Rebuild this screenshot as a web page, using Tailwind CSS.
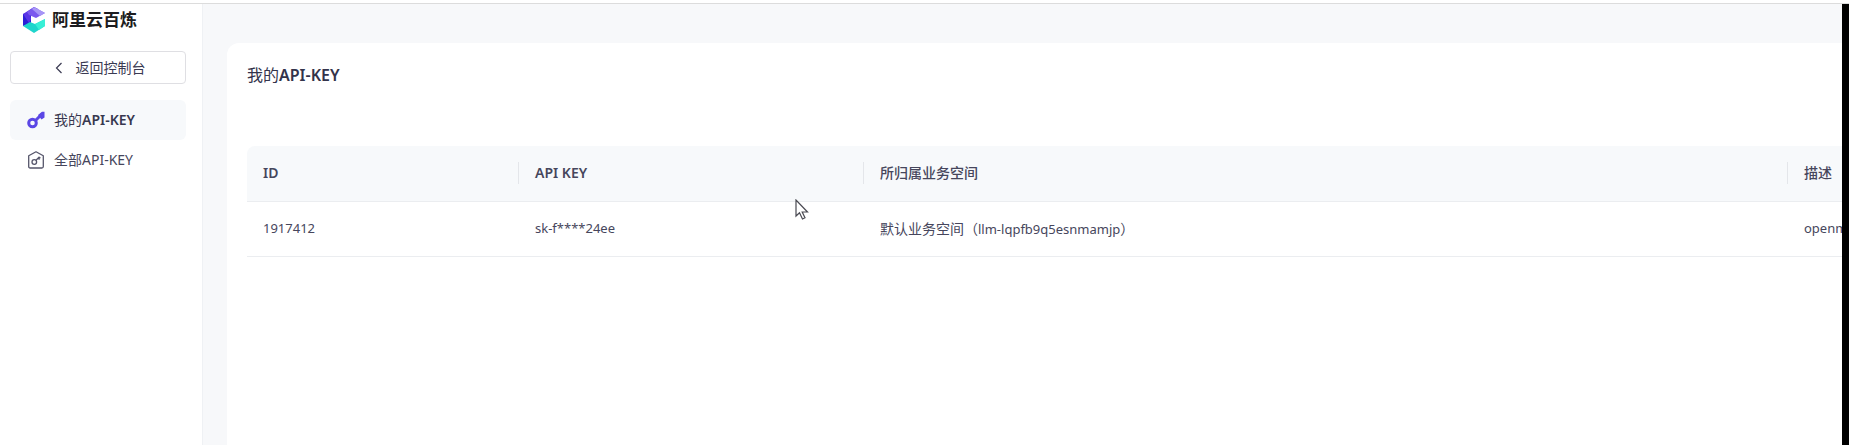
<!DOCTYPE html>
<html lang="zh-CN">
  <head>
    <meta charset="UTF-8" />
    <meta name="viewport" content="width=device-width, initial-scale=1.0" />
    <title>阿里云百炼 - 我的API-KEY</title>
    <script src="https://cdn.jsdelivr.net/npm/@tailwindcss/browser@4"></script>
  </head>
  <body class="flex h-screen flex-col overflow-hidden bg-white font-['Noto_Sans','Noto_Sans_CJK_SC',sans-serif] text-sm text-[#46465c]">
    <div class="h-1 shrink-0 border-b border-[#dcdcdc]"></div>

    <div class="flex min-h-0 flex-1">
      <!-- Sidebar -->
      <aside class="w-[203px] shrink-0 border-r border-[#eff1f4] pr-4 pl-[10px]">
        <a href="#" class="flex h-8 items-center gap-[7px] pl-[13px] text-[17px] font-bold text-[#1c1c20]">
          <svg class="h-[26px] w-[22px]" viewBox="0 0 22 26">
            <path d="M0 7 8 5v12l-8 2z" fill="#2c1fd6" />
            <path d="M0 7 11 0l4 2-8 6 1 4-2 4z" fill="#5a35e6" />
            <path d="M4 5 11 0l11 6-9 5-7-3z" fill="#7b58ee" />
            <path d="M9 2 11 0l11 6-5 3z" fill="#a795f6" />
            <path d="M0 19l7-4 5 2 10-5v7l-11 7z" fill="#1fd5cc" />
            <path d="M12 17l10-5v7l-6 4z" fill="#38efd6" />
          </svg>
          阿里云百炼
        </a>

        <button type="button" class="mt-[15px] flex h-[33px] w-full items-center justify-center gap-[13px] rounded border border-[#dfdfe3] pl-1 text-[#3a3a52]">
          <svg class="h-3 w-2" viewBox="0 0 8 12" fill="none" stroke="currentColor" stroke-width="1.2">
            <path d="M6.500 1 1.500 6l5 5" />
          </svg>
          返回控制台
        </button>

        <nav class="mt-4">
          <a href="#" class="flex h-10 items-center gap-[9px] rounded-md bg-[#f7f9fb] pl-[17px] text-[#38384f]">
            <svg class="size-[18px]" viewBox="0 0 18 18" fill="none" stroke="#5b47e5">
              <circle cx="5.500" cy="12" r="3.800" stroke-width="3" />
              <path d="M8.500 9.500 15.500 2.500" stroke-width="3" />
              <path d="M11 4 15 .8h2.500v5.700l-3 2z" fill="#5b47e5" stroke="none" />
            </svg>
            <span>我的<span class="font-semibold">API-KEY</span></span>
          </a>
          <a href="#" class="flex h-10 items-center gap-[9px] rounded-md pl-[17px]">
            <svg class="size-[18px]" viewBox="0 0 18 18" fill="none" stroke="#55556a" stroke-width="1.300" stroke-linejoin="round">
              <path d="M9 .8 16.300 4.800v10.700q0 1.500-1.500 1.500H3.200q-1.500 0-1.500-1.500V4.800z" />
              <circle cx="7.300" cy="11" r="2.300" />
              <path d="M9 9.300 12.500 5.800M11 7.300l1.600 1.200M12 6.200l1.500.8" />
            </svg>
            全部API-KEY
          </a>
        </nav>
      </aside>

      <!-- Content -->
      <main class="flex min-w-0 flex-1 bg-[#f7f8fa] pt-[39px] pl-6">
        <section class="min-w-0 flex-1 overflow-hidden rounded-tl-xl bg-white pt-5 pl-5">
          <h1 class="text-base text-[#33334b]">我的<span class="font-semibold">API-KEY</span></h1>

          <div class="mt-[59px] overflow-hidden rounded-tl-lg">
            <table class="w-[calc(100%+106px)] table-fixed text-left">
              <colgroup>
                <col class="w-[272px]" />
                <col class="w-[345px]" />
                <col />
                <col class="w-[160px]" />
              </colgroup>
              <thead class="bg-[#f7f9fb]">
                <tr class="h-[55px] border-b border-[#ebedf0]">
                  <th class="font-semibold">
                    <div class="border-r border-[#e4e6ea] px-4 leading-[22px]">ID</div>
                  </th>
                  <th class="font-semibold">
                    <div class="border-r border-[#e4e6ea] px-4 leading-[22px]">API KEY</div>
                  </th>
                  <th class="font-medium">
                    <div class="border-r border-[#e4e6ea] px-4 leading-[22px]">所归属业务空间</div>
                  </th>
                  <th class="px-4 font-medium">描述</th>
                </tr>
              </thead>
              <tbody>
                <tr class="h-[55px] border-b border-[#ebedf0]">
                  <td class="px-4 text-[13px]">1917412</td>
                  <td class="px-4 text-[13px]">sk-f****24ee</td>
                  <td class="px-4">默认业务空间（<span class="text-[13px]">llm-lqpfb9q5esnmamjp</span>）</td>
                  <td class="px-4 text-[13px]">openmanus</td>
                </tr>
              </tbody>
            </table>
          </div>
        </section>
      </main>

      <div class="w-[7px] shrink-0 bg-black"></div>
    </div>

    <!-- Mouse pointer -->
    <svg class="absolute top-[199px] left-[795px] h-[22px] w-[14px]" viewBox="0 0 14 22" fill="#fff" stroke="#4a4a52" stroke-width="1.200">
      <path d="M1 1v16l3.500-3.300 3 6.300 2.500-1.200-2.800-5.800H12.500z" />
    </svg>
  </body>
</html>
